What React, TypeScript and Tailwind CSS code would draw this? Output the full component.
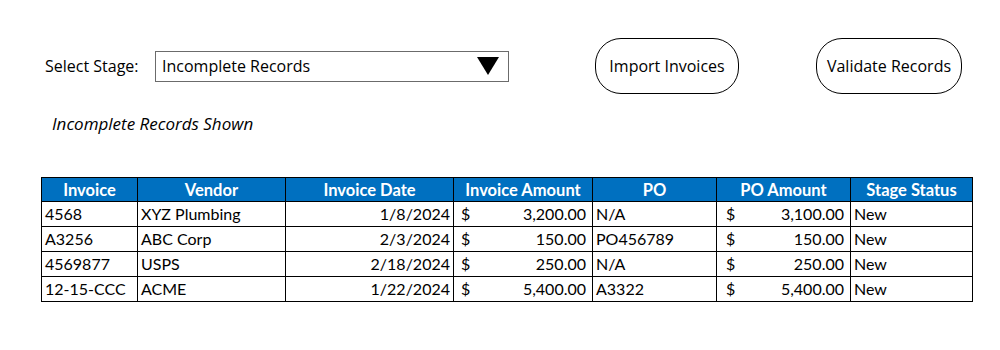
import React from "react";

type Row = {
  invoice: string;
  vendor: string;
  date: string;
  amount: string;
  po: string;
  poAmount: string;
  status: string;
};

const rows: Row[] = [
  { invoice: "4568", vendor: "XYZ Plumbing", date: "1/8/2024", amount: "3,200.00", po: "N/A", poAmount: "3,100.00", status: "New" },
  { invoice: "A3256", vendor: "ABC Corp", date: "2/3/2024", amount: "150.00", po: "PO456789", poAmount: "150.00", status: "New" },
  { invoice: "4569877", vendor: "USPS", date: "2/18/2024", amount: "250.00", po: "N/A", poAmount: "250.00", status: "New" },
  { invoice: "12-15-CCC", vendor: "ACME", date: "1/22/2024", amount: "5,400.00", po: "A3322", poAmount: "5,400.00", status: "New" },
];

const headers = [
  { label: "Invoice", w: "w-[96px]" },
  { label: "Vendor", w: "w-[148px]" },
  { label: "Invoice Date", w: "w-[168px]" },
  { label: "Invoice Amount", w: "w-[139px]" },
  { label: "PO", w: "w-[124px]" },
  { label: "PO Amount", w: "w-[134px]" },
  { label: "Stage Status", w: "w-[122px]" },
];

const cell = "border border-black px-[3px] leading-none";

const Money = ({ value }: { value: string }) => (
  <div className="flex justify-between pl-[4px] pr-[3px]">
    <span>$</span>
    <span>{value}</span>
  </div>
);

const PillButton = ({ label, w }: { label: string; w: string }) => (
  <button
    className={`${w} h-[56px] rounded-[26px] border-[1.5px] border-black bg-white text-[16px] text-black`}
  >
    {label}
  </button>
);

export default function App() {
  return (
    <div className="w-[1000px] h-[350px] bg-white text-black font-['Open_Sans',sans-serif]">
      <div className="flex items-center pt-[38px] pl-[45px]">
        <span className="w-[110px] text-[16px]">Select Stage:</span>
        <div className="w-[354px] h-[31px] border border-[#6b6b6b] flex items-center justify-between pl-[6px] pr-[8px]">
          <span className="text-[16px]">Incomplete Records</span>
          <svg width="24" height="20" viewBox="0 0 24 20">
            <polygon points="1,1 23,1 12,19" fill="black" />
          </svg>
        </div>
        <div className="ml-[86px]">
          <PillButton label="Import Invoices" w="w-[144px]" />
        </div>
        <div className="ml-[77px]">
          <PillButton label="Validate Records" w="w-[146px]" />
        </div>
      </div>

      <p className="mt-[17px] ml-[52px] italic text-[17px]">Incomplete Records Shown</p>

      <table className="mt-[40px] ml-[41px] border-collapse table-fixed font-['Lato',sans-serif] text-[16px]">
        <thead>
          <tr className="bg-[#0070c0] text-white">
            {headers.map((h) => (
              <th key={h.label} className={`${h.w} ${cell} h-[24px] pt-[2px] font-bold text-center text-[16.5px]`}>
                {h.label}
              </th>
            ))}
          </tr>
        </thead>
        <tbody>
          {rows.map((r) => (
            <tr key={r.invoice} className="h-[25px]">
              <td className={`${cell} text-left`}>{r.invoice}</td>
              <td className={`${cell} text-left`}>{r.vendor}</td>
              <td className={`${cell} text-right`}>{r.date}</td>
              <td className={`${cell} px-0`}>
                <Money value={r.amount} />
              </td>
              <td className={`${cell} text-left`}>{r.po}</td>
              <td className={`${cell} px-0`}>
                <div className="pl-[2px]">
                  <Money value={r.poAmount} />
                </div>
              </td>
              <td className={`${cell} text-left`}>{r.status}</td>
            </tr>
          ))}
        </tbody>
      </table>
    </div>
  );
}
